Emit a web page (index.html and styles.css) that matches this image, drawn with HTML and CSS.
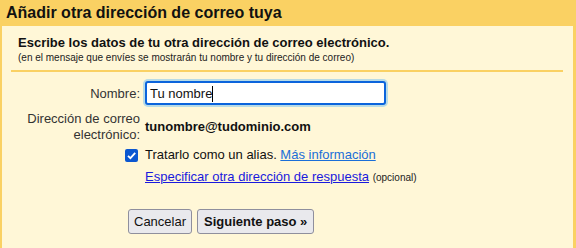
FILE: index.html
```html
<!DOCTYPE html>
<html lang="es">
<head>
<meta charset="utf-8">
<link rel="stylesheet" href="styles.css">
</head>
<body>
<div class="dialog">
  <div class="title">Añadir otra dirección de correo tuya</div>
  <div class="panel">
    <div class="intro">
      <div class="lead">Escribe los datos de tu otra dirección de correo electrónico.</div>
      <div class="note">(en el mensaje que envíes se mostrarán tu nombre y tu dirección de correo)</div>
    </div>
    <div class="form">
      <div class="label name-label">Nombre:</div>
      <div class="field"><span class="value">Tu nombre</span><span class="caret"></span></div>
      <div class="label addr-label">Dirección de correo electrónico:</div>
      <div class="email">tunombre@tudominio.com</div>
      <div class="check-cell"><span class="checkbox"><svg width="13" height="13" viewBox="0 0 13 13"><rect x="0" y="0" width="13" height="13" rx="2" fill="#0b57d0"/><path d="M3 6.8 L5.4 9.1 L10.2 3.9" fill="none" stroke="#fff" stroke-width="1.8"/></svg></span></div>
      <div class="alias">Tratarlo como un alias. <a class="more" href="#">Más información</a></div>
      <div></div>
      <div class="reply"><a class="reply-link" href="#">Especificar otra dirección de respuesta</a> <span class="optional">(opcional)</span></div>
    </div>
    <div class="actions">
      <button class="btn">Cancelar</button>
      <button class="btn primary">Siguiente paso »</button>
    </div>
  </div>
</div>
</body>
</html>
```
FILE: styles.css
```css
html, body {
  margin: 0;
  padding: 0;
  background: #fff7d7;
}
body {
  font-family: "Liberation Sans", Arial, sans-serif;
  font-size: 13px;
  color: #222;
  width: 576px;
  height: 248px;
  overflow: hidden;
}
.dialog {
  display: flex;
  flex-direction: column;
  height: 248px;
}
.title {
  background: #fad163;
  height: 26px;
  box-sizing: border-box;
  padding: 3px 0 0 6px;
  font-weight: bold;
  font-size: 16px;
  line-height: 19px;
  color: #111;
}
.panel {
  flex: 1;
  background: #fff7d7;
  border-left: 2px solid #fad163;
  border-right: 3px solid #fad163;
  padding: 0 10px 0 9px;
}
.intro {
  padding: 9px 0 6px 7px;
  border-bottom: 2px solid #fad163;
}
.lead {
  font-weight: bold;
  font-size: 13px;
  line-height: 16px;
  color: #111;
}
.note {
  font-size: 10px;
  line-height: 13px;
  color: #222;
}
.form {
  display: grid;
  grid-template-columns: 129px 1fr;
  column-gap: 5px;
  row-gap: 0;
  margin-top: 9px;
  align-items: center;
}
.label {
  text-align: right;
  line-height: 16px;
  color: #333;
}
.name-label {
  padding-top: 2px;
}
.addr-label {
  margin-top: 6px;
}
.field {
  width: 241px;
  height: 24px;
  box-sizing: border-box;
  border: 2px solid #0b64dc;
  border-radius: 3px;
  box-shadow: 0 0 0 2px #b8dbe6;
  background: #fff;
  padding: 3px 0 0 3px;
  display: flex;
  align-items: flex-start;
  line-height: 16px;
  color: #111;
}
.caret {
  display: inline-block;
  width: 1px;
  height: 16px;
  background: #000;
}
.email {
  font-weight: bold;
  color: #111;
  margin-top: 5px;
}
.check-cell {
  display: flex;
  justify-content: flex-end;
  padding-right: 2px;
  margin-top: 4px;
}
.checkbox {
  display: block;
  width: 13px;
  height: 13px;
}
.checkbox svg {
  display: block;
}
.alias {
  margin-top: 4px;
  line-height: 16px;
  color: #111;
}
.more {
  color: #1a6ed8;
  text-decoration: underline;
}
.reply {
  margin-top: 6px;
  line-height: 16px;
}
.reply-link {
  color: #1a1add;
  text-decoration: underline;
}
.optional {
  font-size: 10px;
  color: #222;
}
.actions {
  display: flex;
  gap: 5px;
  margin-top: 23px;
  padding-left: 117px;
}
.btn {
  font-family: "Liberation Sans", Arial, sans-serif;
  font-size: 13px;
  height: 25px;
  padding: 0 5px;
  background: #e9e9ed;
  border: 1px solid #8f8f9d;
  border-radius: 3px;
  color: #111;
}
.primary {
  font-weight: bold;
  padding: 0 6px;
}
```
